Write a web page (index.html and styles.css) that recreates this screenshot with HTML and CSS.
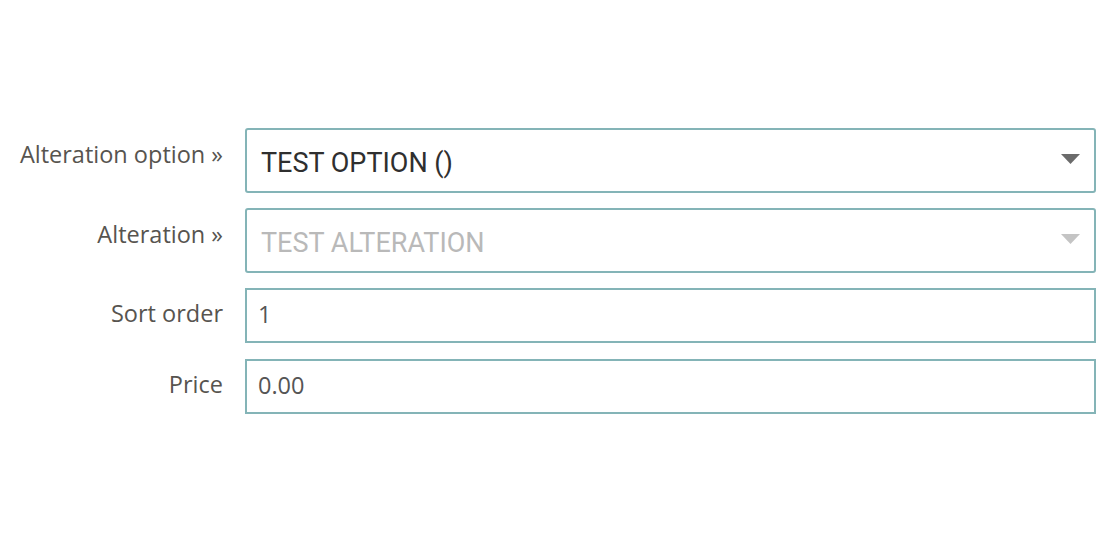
FILE: index.html
```html
<!DOCTYPE html>
<html lang="en">
<head>
<meta charset="utf-8">
<title>Alteration</title>
<link rel="stylesheet" href="styles.css">
</head>
<body>
<form class="form">
  <div class="row">
    <label class="label">Alteration option »</label>
    <div class="select">
      <span class="select-text">TEST OPTION ()</span>
      <svg class="caret" width="19" height="10" viewBox="0 0 19 10"><path d="M0 0H19L9.5 10Z" fill="#6b6b6b"/></svg>
    </div>
  </div>
  <div class="row">
    <label class="label">Alteration »</label>
    <div class="select disabled">
      <span class="select-text">TEST ALTERATION</span>
      <svg class="caret" width="19" height="10" viewBox="0 0 19 10"><path d="M0 0H19L9.5 10Z" fill="#c4c4c4"/></svg>
    </div>
  </div>
  <div class="row row-input">
    <label class="label">Sort order</label>
    <div class="input">1</div>
  </div>
  <div class="row row-input">
    <label class="label">Price</label>
    <div class="input">0.00</div>
  </div>
</form>
</body>
</html>
```

FILE: styles.css
```css
html, body {
  margin: 0;
  padding: 0;
  background: #ffffff;
}

.form {
  display: flex;
  flex-direction: column;
  gap: 15px;
  padding-top: 128px;
  padding-right: 24px;
}

.row {
  display: flex;
  align-items: flex-start;
  height: 65px;
}

.row-input {
  height: 55px;
}

.row-input + .row-input {
  margin-top: 1px;
}

.label {
  width: 223px;
  flex: none;
  text-align: right;
  font-family: "Open Sans", "Noto Sans", sans-serif;
  font-size: 23.5px;
  color: #57544f;
  padding-top: 10px;
  letter-spacing: 0;
  box-sizing: border-box;
}

.row-input .label {
  padding-top: 9px;
}

.select {
  margin-left: 22px;
  flex: 1;
  height: 65px;
  box-sizing: border-box;
  border: 2px solid #84b4b7;
  border-radius: 3px;
  display: flex;
  align-items: center;
  justify-content: space-between;
  padding: 0 14px 0 14px;
}

.select-text {
  font-family: Roboto, "Liberation Sans", sans-serif;
  font-size: 27px;
  color: #2f2f2f;
  padding-top: 5px;
}

.select.disabled .select-text {
  color: #b9b9b9;
}

.caret {
  display: block;
  margin-top: -3px;
}

.input {
  margin-left: 22px;
  flex: 1;
  height: 55px;
  box-sizing: border-box;
  border: 2px solid #84b4b7;
  display: flex;
  align-items: center;
  padding: 0 12px 3px 11px;
  font-family: "Open Sans", "Noto Sans", sans-serif;
  font-size: 23.5px;
  color: #555555;
}
```
